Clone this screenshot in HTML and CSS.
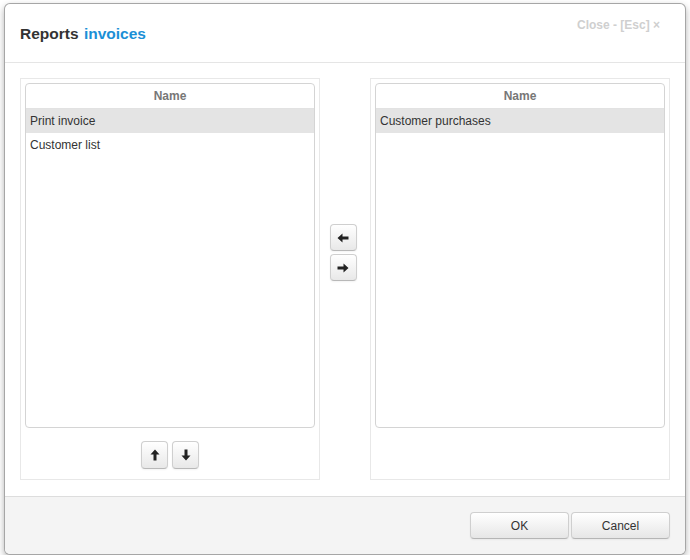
FILE: index.html
```html
<!DOCTYPE html>
<html>
<head>
<meta charset="utf-8">
<link rel="stylesheet" href="styles.css">
</head>
<body>
<div class="modal">
  <div class="modal-header">
    <h3 class="title">Reports <span class="accent">invoices</span></h3>
    <span class="close">Close - [Esc] ×</span>
  </div>
  <div class="modal-body">
    <div class="panel">
      <div class="grid">
        <div class="grid-head">Name</div>
        <div class="row selected">Print invoice</div>
        <div class="row">Customer list</div>
      </div>
      <div class="panel-tools">
        <button class="icon-btn" title="Up"><svg width="12" height="12" viewBox="0 0 12 12"><polygon points="6,0.5 10.5,5.5 7.5,5.5 7.5,11.5 4.5,11.5 4.5,5.5 1.5,5.5" fill="#222"/></svg></button>
        <button class="icon-btn" title="Down"><svg width="12" height="12" viewBox="0 0 12 12"><polygon points="6,11.5 10.5,6.5 7.5,6.5 7.5,0.5 4.5,0.5 4.5,6.5 1.5,6.5" fill="#222"/></svg></button>
      </div>
    </div>
    <div class="mover">
      <button class="icon-btn" title="Left"><svg width="12" height="12" viewBox="0 0 12 12"><polygon points="0.5,6 5.5,1.5 5.5,4.5 11.5,4.5 11.5,7.5 5.5,7.5 5.5,10.5" fill="#222"/></svg></button>
      <button class="icon-btn" title="Right"><svg width="12" height="12" viewBox="0 0 12 12"><polygon points="11.5,6 6.5,1.5 6.5,4.5 0.5,4.5 0.5,7.5 6.5,7.5 6.5,10.5" fill="#222"/></svg></button>
    </div>
    <div class="panel">
      <div class="grid">
        <div class="grid-head">Name</div>
        <div class="row selected">Customer purchases</div>
      </div>
    </div>
  </div>
  <div class="modal-footer">
    <button class="btn">OK</button>
    <button class="btn">Cancel</button>
  </div>
</div>
</body>
</html>
```
FILE: styles.css
```css
html, body {
  margin: 0;
  padding: 0;
  background: #fff;
  font-family: "Liberation Sans", Arial, sans-serif;
  color: #333;
}
body {
  padding: 3px 0 0 4px;
}
.modal {
  width: 680px;
  height: 550px;
  border: 1px solid rgba(0,0,0,0.35);
  border-radius: 6px;
  box-shadow: 0 3px 7px rgba(0,0,0,0.3);
  background: #fff;
  display: flex;
  flex-direction: column;
  overflow: hidden;
}
.modal-header {
  height: 58px;
  border-bottom: 1px solid #e5e5e5;
  display: flex;
  justify-content: space-between;
  align-items: flex-start;
  padding: 0 25px 0 15px;
}
.title {
  margin: 21px 0 0 0;
  font-size: 15.5px;
  font-weight: bold;
  color: #333;
  line-height: 18px;
}
.accent {
  color: #1b8fd6;
  margin-left: 1px;
}
.close {
  margin-top: 14px;
  font-size: 12px;
  font-weight: bold;
  color: #cfcfcf;
  line-height: 14px;
}
.modal-body {
  flex: 1;
  display: flex;
  padding: 15px 14px 15px 15px;
  gap: 0;
}
.panel {
  width: 290px;
  height: 392px;
  border: 1px solid #e8e8e8;
  padding: 4px;
  display: flex;
  flex-direction: column;
}
.grid {
  height: 343px;
  border: 1px solid #d4d4d4;
  border-radius: 4px;
  overflow: hidden;
}
.grid-head {
  height: 24px;
  line-height: 24px;
  text-align: center;
  font-size: 12px;
  font-weight: bold;
  color: #777;
  border-bottom: 1px solid #e2e2e2;
}
.row {
  height: 24px;
  line-height: 24px;
  padding-left: 4px;
  font-size: 12px;
  color: #333;
}
.row.selected {
  background: #e4e4e4;
}
.panel-tools {
  display: flex;
  justify-content: center;
  gap: 4px;
  margin-top: 13px;
}
.panel-tools .icon-btn {
  height: 28px;
}
.mover {
  width: 46px;
  display: flex;
  flex-direction: column;
  align-items: center;
  gap: 3px;
  padding: 146px 4px 0 0;
}
.icon-btn {
  width: 27px;
  height: 27px;
  padding: 0;
  border: 1px solid #cfcfcf;
  border-bottom-color: #b8b8b8;
  border-radius: 4px;
  background: linear-gradient(#ffffff, #e8e8e8);
  box-shadow: 0 1px 2px rgba(0,0,0,0.05);
  display: flex;
  align-items: center;
  justify-content: center;
}
.modal-footer {
  height: 58px;
  border-top: 1px solid #dddddd;
  background: #f4f4f4;
  display: flex;
  justify-content: flex-end;
  align-items: flex-start;
  gap: 2px;
  padding: 15px 15px 0 0;
  box-sizing: border-box;
}
.btn {
  width: 99px;
  height: 27px;
  font-family: "Liberation Sans", Arial, sans-serif;
  font-size: 12px;
  color: #333;
  border: 1px solid #cfcfcf;
  border-bottom-color: #b5b5b5;
  border-radius: 4px;
  background: linear-gradient(#ffffff, #e6e6e6);
  box-shadow: 0 1px 2px rgba(0,0,0,0.05);
  padding: 0;
}
```
